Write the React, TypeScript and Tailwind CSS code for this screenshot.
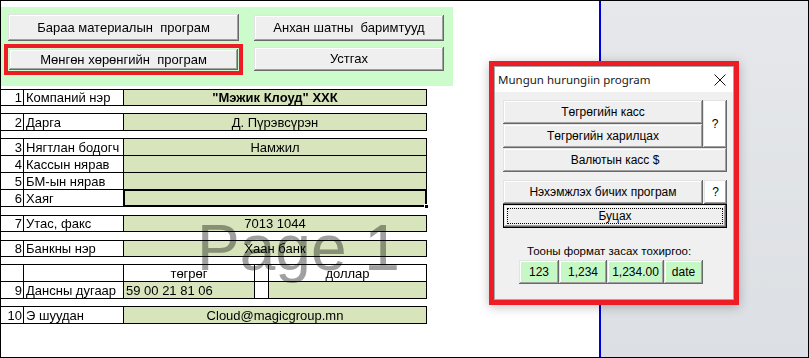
import React from 'react';

const bevel =
  'shadow-[inset_-1px_-1px_0_#696969,inset_1px_1px_0_#e3e3e3,inset_-2px_-2px_0_#a0a0a0,inset_2px_2px_0_#ffffff]';

interface BtnProps {
  className?: string;
  children?: React.ReactNode;
}

const SheetButton: React.FC<BtnProps> = ({ className = '', children }) => (
  <div className={`flex items-center justify-center bg-[#efefef] text-[13px] text-black whitespace-pre ${bevel} ${className}`}>
    {children}
  </div>
);

const DlgButton: React.FC<BtnProps> = ({ className = '', children }) => (
  <div className={`flex items-center justify-center text-[12px] text-black whitespace-pre ${bevel} ${className}`}>
    {children}
  </div>
);

interface RowProps {
  n?: string;
  label?: string;
  value?: string;
  bold?: boolean;
  h: string;
  selected?: boolean;
}

const Row: React.FC<RowProps> = ({ n, label, value, bold, h, selected }) => (
  <div className={`flex ${h} border-b border-black text-[13px] leading-[15px]`}>
    <div className="w-[23px] border-r border-black flex items-end justify-end pr-[1px]">{n}</div>
    <div className="w-[100px] border-r border-black flex items-end pl-[2px] whitespace-nowrap">{label}</div>
    <div className={`relative w-[303px] border-r border-black bg-[#d8e4bc] flex items-end justify-center ${bold ? 'font-bold' : ''}`}>
      {value}
      {selected && (
        <>
          <div className="absolute -left-[1px] -top-[1px] -right-[1px] -bottom-[1px] border-2 border-black" />
          <div className="absolute -right-[3px] -bottom-[3px] w-[5px] h-[5px] bg-black border border-white" />
        </>
      )}
    </div>
  </div>
);

export default function App() {
  return (
    <div className="relative w-[809px] h-[358px] border border-black bg-white flex overflow-hidden font-['Liberation_Sans',Arial,sans-serif] text-black">
      {/* sheet */}
      <div className="w-[598px] flex flex-col">
        {/* green command panel */}
        <div className="mt-[6px] w-[452px] h-[79px] bg-[#ccfccc] flex pl-[3px]">
          <div className="w-[239px] pt-[7px] flex flex-col">
            <SheetButton className="mx-[4px] h-[27px]">Бараа материалын  програм</SheetButton>
            <div className="mt-[3px] h-[31px] border-[4px] border-[#ee1c25] p-[1px]">
              <SheetButton className="h-full">Мөнгөн хөрөнгийн  програм</SheetButton>
            </div>
          </div>
          <div className="ml-[11px] w-[190px] pt-[8px] flex flex-col">
            <SheetButton className="h-[26px]">Анхан шатны  баримтууд</SheetButton>
            <SheetButton className="mt-[6px] h-[24px]">Устгах</SheetButton>
          </div>
        </div>

        {/* table */}
        <div className="mt-[3px] w-[426px] border-t border-black">
          <Row h="h-[16px]" n="1" label="Компаний нэр" value={'"Мэжик Клоуд" ХХК'} bold />
        </div>
        <div className="mt-[7px] w-[426px] border-t border-black">
          <Row h="h-[17px]" n="2" label="Дарга" value="Д. Пүрэвсүрэн" />
        </div>
        <div className="mt-[7px] w-[426px] border-t border-black">
          <Row h="h-[17px]" n="3" label="Нягтлан бодогч" value="Намжил" />
          <Row h="h-[17px]" n="4" label="Кассын нярав" />
          <Row h="h-[17px]" n="5" label="БМ-ын нярав" />
          <Row h="h-[17px]" n="6" label="Хаяг" selected />
        </div>
        <div className="mt-[8px] w-[426px] border-t border-black">
          <Row h="h-[16px]" n="7" label="Утас, факс" value="7013 1044" />
        </div>
        <div className="mt-[8px] w-[426px] border-t border-black">
          <Row h="h-[16px]" n="8" label="Банкны нэр" value="Хаан банк" />
        </div>
        <div className="mt-[7px] w-[426px] border-t border-black text-[13px] leading-[15px]">
          <div className="flex h-[17px] border-b border-black">
            <div className="w-[23px] border-r border-black" />
            <div className="w-[100px] border-r border-black" />
            <div className="w-[131px] border-r border-black flex items-end justify-center">төгрөг</div>
            <div className="w-[14px] border-r border-black" />
            <div className="w-[158px] border-r border-black flex items-end justify-center">доллар</div>
          </div>
          <div className="flex h-[17px] border-b border-black">
            <div className="w-[23px] border-r border-black flex items-end justify-end pr-[1px]">9</div>
            <div className="w-[100px] border-r border-black flex items-end pl-[2px] whitespace-nowrap">Дансны дугаар</div>
            <div className="w-[131px] border-r border-black bg-[#d8e4bc] flex items-end pl-[2px]">59 00 21 81 06</div>
            <div className="w-[14px] border-r border-black" />
            <div className="w-[158px] border-r border-black bg-[#d8e4bc]" />
          </div>
        </div>
        <div className="mt-[7px] w-[426px] border-t border-black">
          <Row h="h-[17px]" n="10" label="Э шуудан" value="Cloud@magicgroup.mn" />
        </div>
      </div>

      {/* page break line */}
      <div className="w-[2px] bg-[#0000d8]" />

      {/* outside print area */}
      <div className="flex-1 bg-gradient-to-b from-[#e6e8eb] to-[#dcdfe3]" />

      {/* page watermark */}
      <div className="pointer-events-none absolute left-[196px] top-[215px] text-[64px] leading-[64px] text-[#a0a0a0] mix-blend-multiply whitespace-pre">
        Page 1
      </div>

      {/* dialog */}
      <div className="absolute left-[488px] top-[60px] w-[250px] h-[244px] border-[5px] border-[#ee1c25] shadow-[0_2px_10px_rgba(0,0,0,0.25)]">
        <div className="h-full border border-[#a8a8a8] bg-[#f0f0f0] flex flex-col">
          <div className="h-[25px] bg-white flex items-center justify-between pl-[3px] pr-[7px]">
            <span className="text-[11.5px] font-['Noto_Sans',sans-serif] text-[#1a1a1a]">Mungun hurungiin program</span>
            <svg width="12" height="12" viewBox="0 0 12 12" className="mt-[1px]">
              <path d="M0.5 0.5 L11.5 11.5 M11.5 0.5 L0.5 11.5" stroke="#111" strokeWidth="1" fill="none" />
            </svg>
          </div>
          <div className="pt-[8px] pl-[8px] flex flex-col">
            <div className="flex">
              <div className="w-[200px] flex flex-col">
                <DlgButton className="h-[24px] bg-[#efefef]">Төгрөгийн касс</DlgButton>
                <DlgButton className="h-[24px] bg-[#efefef]">Төгрөгийн харилцах</DlgButton>
              </div>
              <DlgButton className="w-[24px] h-[48px] bg-white">?</DlgButton>
            </div>
            <DlgButton className="w-[224px] h-[24px] bg-[#efefef]">Валютын касс $</DlgButton>
            <div className="flex mt-[8px]">
              <DlgButton className="w-[200px] h-[24px] bg-[#efefef]">Нэхэмжлэх бичих програм</DlgButton>
              <DlgButton className="ml-[1px] w-[23px] h-[24px] bg-white">?</DlgButton>
            </div>
            <div className="relative w-[224px] h-[24px] border border-black">
              <DlgButton className="h-full bg-[#efefef]">Буцах</DlgButton>
              <div className="absolute left-[3px] top-[3px] right-[3px] bottom-[3px] border border-dotted border-black" />
            </div>
            <div className="mt-[16px] pl-[24px] text-[11.5px] leading-[15px] whitespace-nowrap">Тооны формат засах тохиргоо:</div>
            <div className="flex pl-[16px] mt-[1px]">
              <DlgButton className="w-[40px] h-[24px] bg-[#c6f8c6]">123</DlgButton>
              <DlgButton className="w-[48px] h-[24px] bg-[#c6f8c6]">1,234</DlgButton>
              <DlgButton className="w-[57px] h-[24px] bg-[#c6f8c6]">1,234.00</DlgButton>
              <DlgButton className="w-[39px] h-[24px] bg-[#c6f8c6]">date</DlgButton>
            </div>
          </div>
        </div>
      </div>
    </div>
  );
}
